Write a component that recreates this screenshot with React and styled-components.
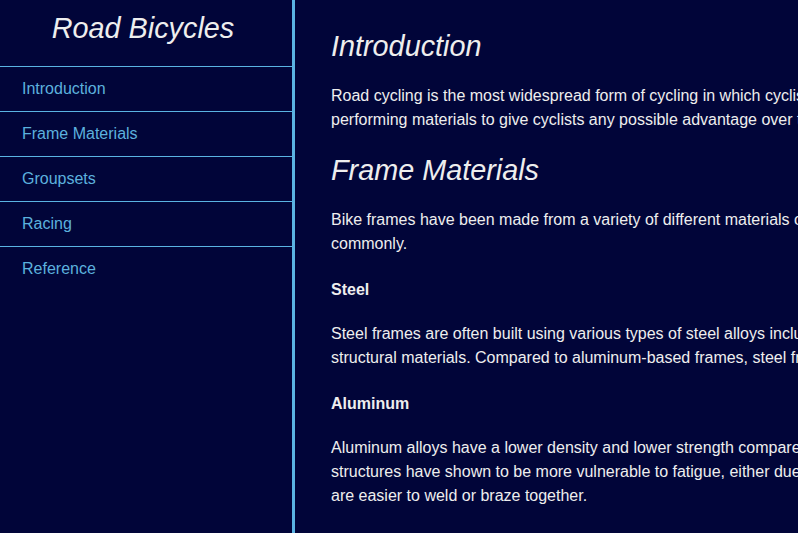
import React from "react";
import styled, { createGlobalStyle } from "styled-components";

const GlobalStyle = createGlobalStyle`
  html, body {
    margin: 0;
    padding: 0;
    background-color: #010539;
    overflow: hidden;
  }
  body {
    font-family: "Liberation Sans", Arial, sans-serif;
    color: #eeeeee;
  }
`;

const links = ["Introduction", "Frame Materials", "Groupsets", "Racing", "Reference"];

export default function App() {
  return (
    <>
      <GlobalStyle />
      <Page>
        <Navbar>
          <NavHeader>
            <h1>Road Bicycles</h1>
          </NavHeader>
          <NavList>
            {links.map((l) => (
              <NavItem key={l}>
                <a href={"#" + l.replace(" ", "_")}>{l}</a>
              </NavItem>
            ))}
          </NavList>
        </Navbar>
        <Main>
          <Section id="Introduction">
            <h2>Introduction</h2>
            <p>
              Road cycling is the most widespread form of cycling in which cyclists ride on paved
              roads. Manufacturers are constantly researching better performing materials to give
              cyclists any possible advantage over their competition.
            </p>
          </Section>
          <Section id="Frame_Materials">
            <h2>Frame Materials</h2>
            <p>
              Bike frames have been made from a variety of different materials over the years.
              Steel, aluminum, titanium and carbon fiber are used most commonly.
            </p>
            <h4>Steel</h4>
            <p>
              Steel frames are often built using various types of steel alloys including chromoly,
              which is one of the most widely available and cheapest structural materials. Compared
              to aluminum-based frames, steel frames are heavier but more durable.
            </p>
            <h4>Aluminum</h4>
            <p>
              Aluminum alloys have a lower density and lower strength compared to steel. However,
              the material is much lighter, and aluminum frame structures have shown to be more
              vulnerable to fatigue, either due to manufacturing defects or the lower fatigue limit
              of aluminum. Still, these are easier to weld or braze together.
            </p>
          </Section>
        </Main>
      </Page>
    </>
  );
}

const Page = styled.div`
  display: flex;
  align-items: stretch;
  min-height: 100vh;
`;

const Navbar = styled.nav`
  flex: none;
  width: 292px;
  border-right: 3px solid #5ab3e2;
`;

const NavHeader = styled.header`
  height: 66px;
  box-sizing: border-box;
  padding: 12px 6px 0 0;
  text-align: center;
  h1 {
    margin: 0;
    font-size: 28.8px;
    font-weight: normal;
    font-style: italic;
    line-height: 33px;
    color: #eeeeee;
  }
`;

const NavList = styled.ul`
  list-style: none;
  margin: 0;
  padding: 0;
`;

const NavItem = styled.li`
  border-top: 1px solid #5ab3e2;
  a {
    display: flex;
    align-items: center;
    height: 44px;
    padding-left: 22px;
    font-size: 16px;
    color: #5cb1de;
    text-decoration: none;
  }
`;

const Main = styled.main`
  flex: none;
  width: 1010px;
  padding: 8px 0 0 36px;
`;

const Section = styled.section`
  h2 {
    margin: 22px 0 21px;
    font-size: 28.8px;
    font-weight: normal;
    font-style: italic;
    line-height: 33px;
  }
  h4 {
    margin: 22px 0 20px;
    font-size: 16px;
    font-weight: bold;
    line-height: 24px;
  }
  p {
    margin: 20px 0;
    font-size: 16px;
    line-height: 24px;
  }
`;
